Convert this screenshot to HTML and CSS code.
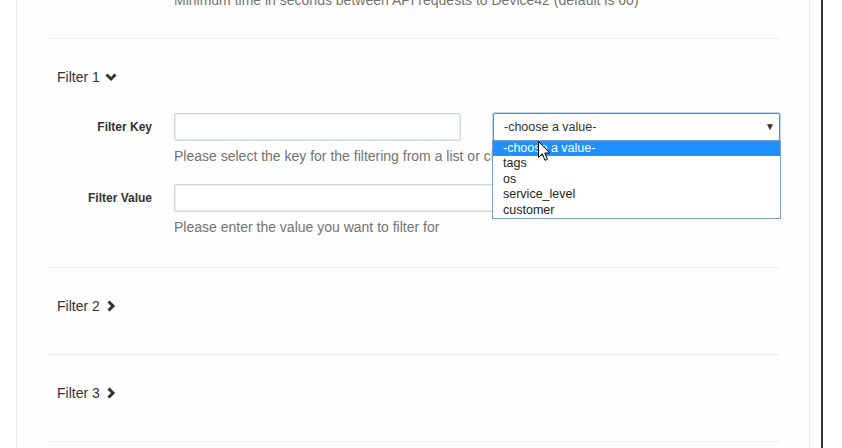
FILE: index.html
```html
<!DOCTYPE html>
<html>
<head>
<meta charset="utf-8">
<link rel="stylesheet" href="styles.css">
</head>
<body>
<div class="page">
  <div class="panel">
    <div class="form-body">
      <p class="top-help">Minimum time in seconds between API requests to Device42 (default is 60)</p>
      <hr class="sep">
      <section class="filter open">
        <h4 class="filter-title">Filter 1
          <svg class="chev-down" width="12" height="9" viewBox="0 0 12 9"><polyline points="1.5,1.5 6,6 10.5,1.5" fill="none" stroke="#333" stroke-width="3"/></svg>
        </h4>
        <div class="form-row">
          <label class="lbl">Filter Key</label>
          <div class="ctrl">
            <div class="pair">
              <div class="input"></div>
              <div class="select-wrap">
                <div class="select">-choose a value-<span class="arrow">&#9660;</span></div>
                <ul class="dropdown">
                  <li class="active">-choose a value-</li>
                  <li>tags</li>
                  <li>os</li>
                  <li>service_level</li>
                  <li>customer</li>
                  <svg class="cursor" width="13" height="21" viewBox="0 0 13 21"><path d="M0.5,0.5 L0.5,16.5 L4.3,12.8 L7,19.3 L9.4,18.3 L6.8,12 L11.8,12 Z" fill="#fff" stroke="#000" stroke-width="1"/></svg>
                </ul>
              </div>
            </div>
            <p class="help">Please select the key for the filtering from a list or choose a value</p>
          </div>
        </div>
        <div class="form-row second">
          <label class="lbl">Filter Value</label>
          <div class="ctrl">
            <div class="input"></div>
            <p class="help">Please enter the value you want to filter for</p>
          </div>
        </div>
      </section>
      <hr class="sep">
      <section class="filter">
        <h4 class="filter-title">Filter 2
          <svg class="chev-right" width="9" height="12" viewBox="0 0 9 12"><polyline points="1.5,1.5 6,6 1.5,10.5" fill="none" stroke="#333" stroke-width="3"/></svg>
        </h4>
      </section>
      <hr class="sep">
      <section class="filter">
        <h4 class="filter-title">Filter 3
          <svg class="chev-right" width="9" height="12" viewBox="0 0 9 12"><polyline points="1.5,1.5 6,6 1.5,10.5" fill="none" stroke="#333" stroke-width="3"/></svg>
        </h4>
      </section>
      <hr class="sep">
    </div>
  </div>
  <div class="edge"></div>
</div>
</body>
</html>
```
FILE: styles.css
```css
html, body {
  margin: 0;
  padding: 0;
  background: #fff;
  height: 448px;
  overflow: hidden;
}
body {
  font-family: "Liberation Sans", Arial, sans-serif;
  color: #333;
}
.page {
  display: flex;
  height: 448px;
}
.panel {
  margin-left: 16px;
  width: 794px;
  box-sizing: border-box;
  border-left: 1px solid #ececec;
  border-right: 1px solid #ececec;
  padding: 0 29px;
  background: #fefefe;
}
.edge {
  margin-left: 11px;
  width: 2px;
  background: #333;
}
.form-body {
  margin-top: -10px;
}
.top-help {
  margin: 0 0 28px 128px;
  font-size: 14px;
  line-height: 20px;
  color: #737373;
  white-space: nowrap;
}
.sep {
  border: 0;
  border-top: 1px solid #eee;
  margin: 0;
  height: 0;
}
.filter {
  padding: 28px 0 38px;
}
.filter.open {
  padding: 28px 0 30px;
}
.filter-title {
  margin: 0;
  padding-left: 11px;
  font-size: 14px;
  font-weight: normal;
  line-height: 20px;
  color: #333;
  display: flex;
  align-items: center;
  gap: 5px;
}
.chev-right {
  margin-left: 2px;
}
.form-row {
  margin-top: 26px;
  display: grid;
  grid-template-columns: 106px 1fr;
  column-gap: 22px;
}
.form-row.second {
  margin-top: 18px;
}
.lbl {
  text-align: right;
  font-weight: bold;
  font-size: 12px;
  height: 28px;
  line-height: 28px;
  color: #333;
}
.pair {
  display: grid;
  grid-template-columns: 1fr 1fr;
  column-gap: 32px;
}
.input {
  height: 28px;
  box-sizing: border-box;
  border: 1px solid #cfd8e1;
  box-shadow: inset 0 0 0 1px #eaeef2;
  border-radius: 2px;
  background: #fff;
}
.help {
  margin: 5px 0 0;
  font-size: 14px;
  line-height: 20px;
  color: #737373;
  white-space: nowrap;
}
.select-wrap {
  position: relative;
}
.select {
  height: 28px;
  box-sizing: border-box;
  border: 1px solid #3d96dc;
  box-shadow: 0 0 0 1px rgba(61, 150, 220, 0.35);
  border-radius: 2px;
  background: #fff;
  font-size: 12.5px;
  line-height: 26px;
  padding-left: 10px;
  color: #333;
  display: flex;
  justify-content: space-between;
}
.arrow {
  font-size: 10px;
  width: 14px;
  color: #333;
}
.dropdown {
  position: absolute;
  top: 27px;
  left: -1px;
  right: -1px;
  margin: 0;
  padding: 0;
  list-style: none;
  background: #fff;
  border: 1px solid #7d9cc8;
  z-index: 5;
}
.dropdown li {
  height: 15.4px;
  line-height: 15.4px;
  font-size: 12.5px;
  padding-left: 10px;
  color: #222;
}
.dropdown li.active {
  background: #1e90ff;
  color: #fff;
}
.cursor {
  position: absolute;
  left: 45px;
  top: 0;
}
```
